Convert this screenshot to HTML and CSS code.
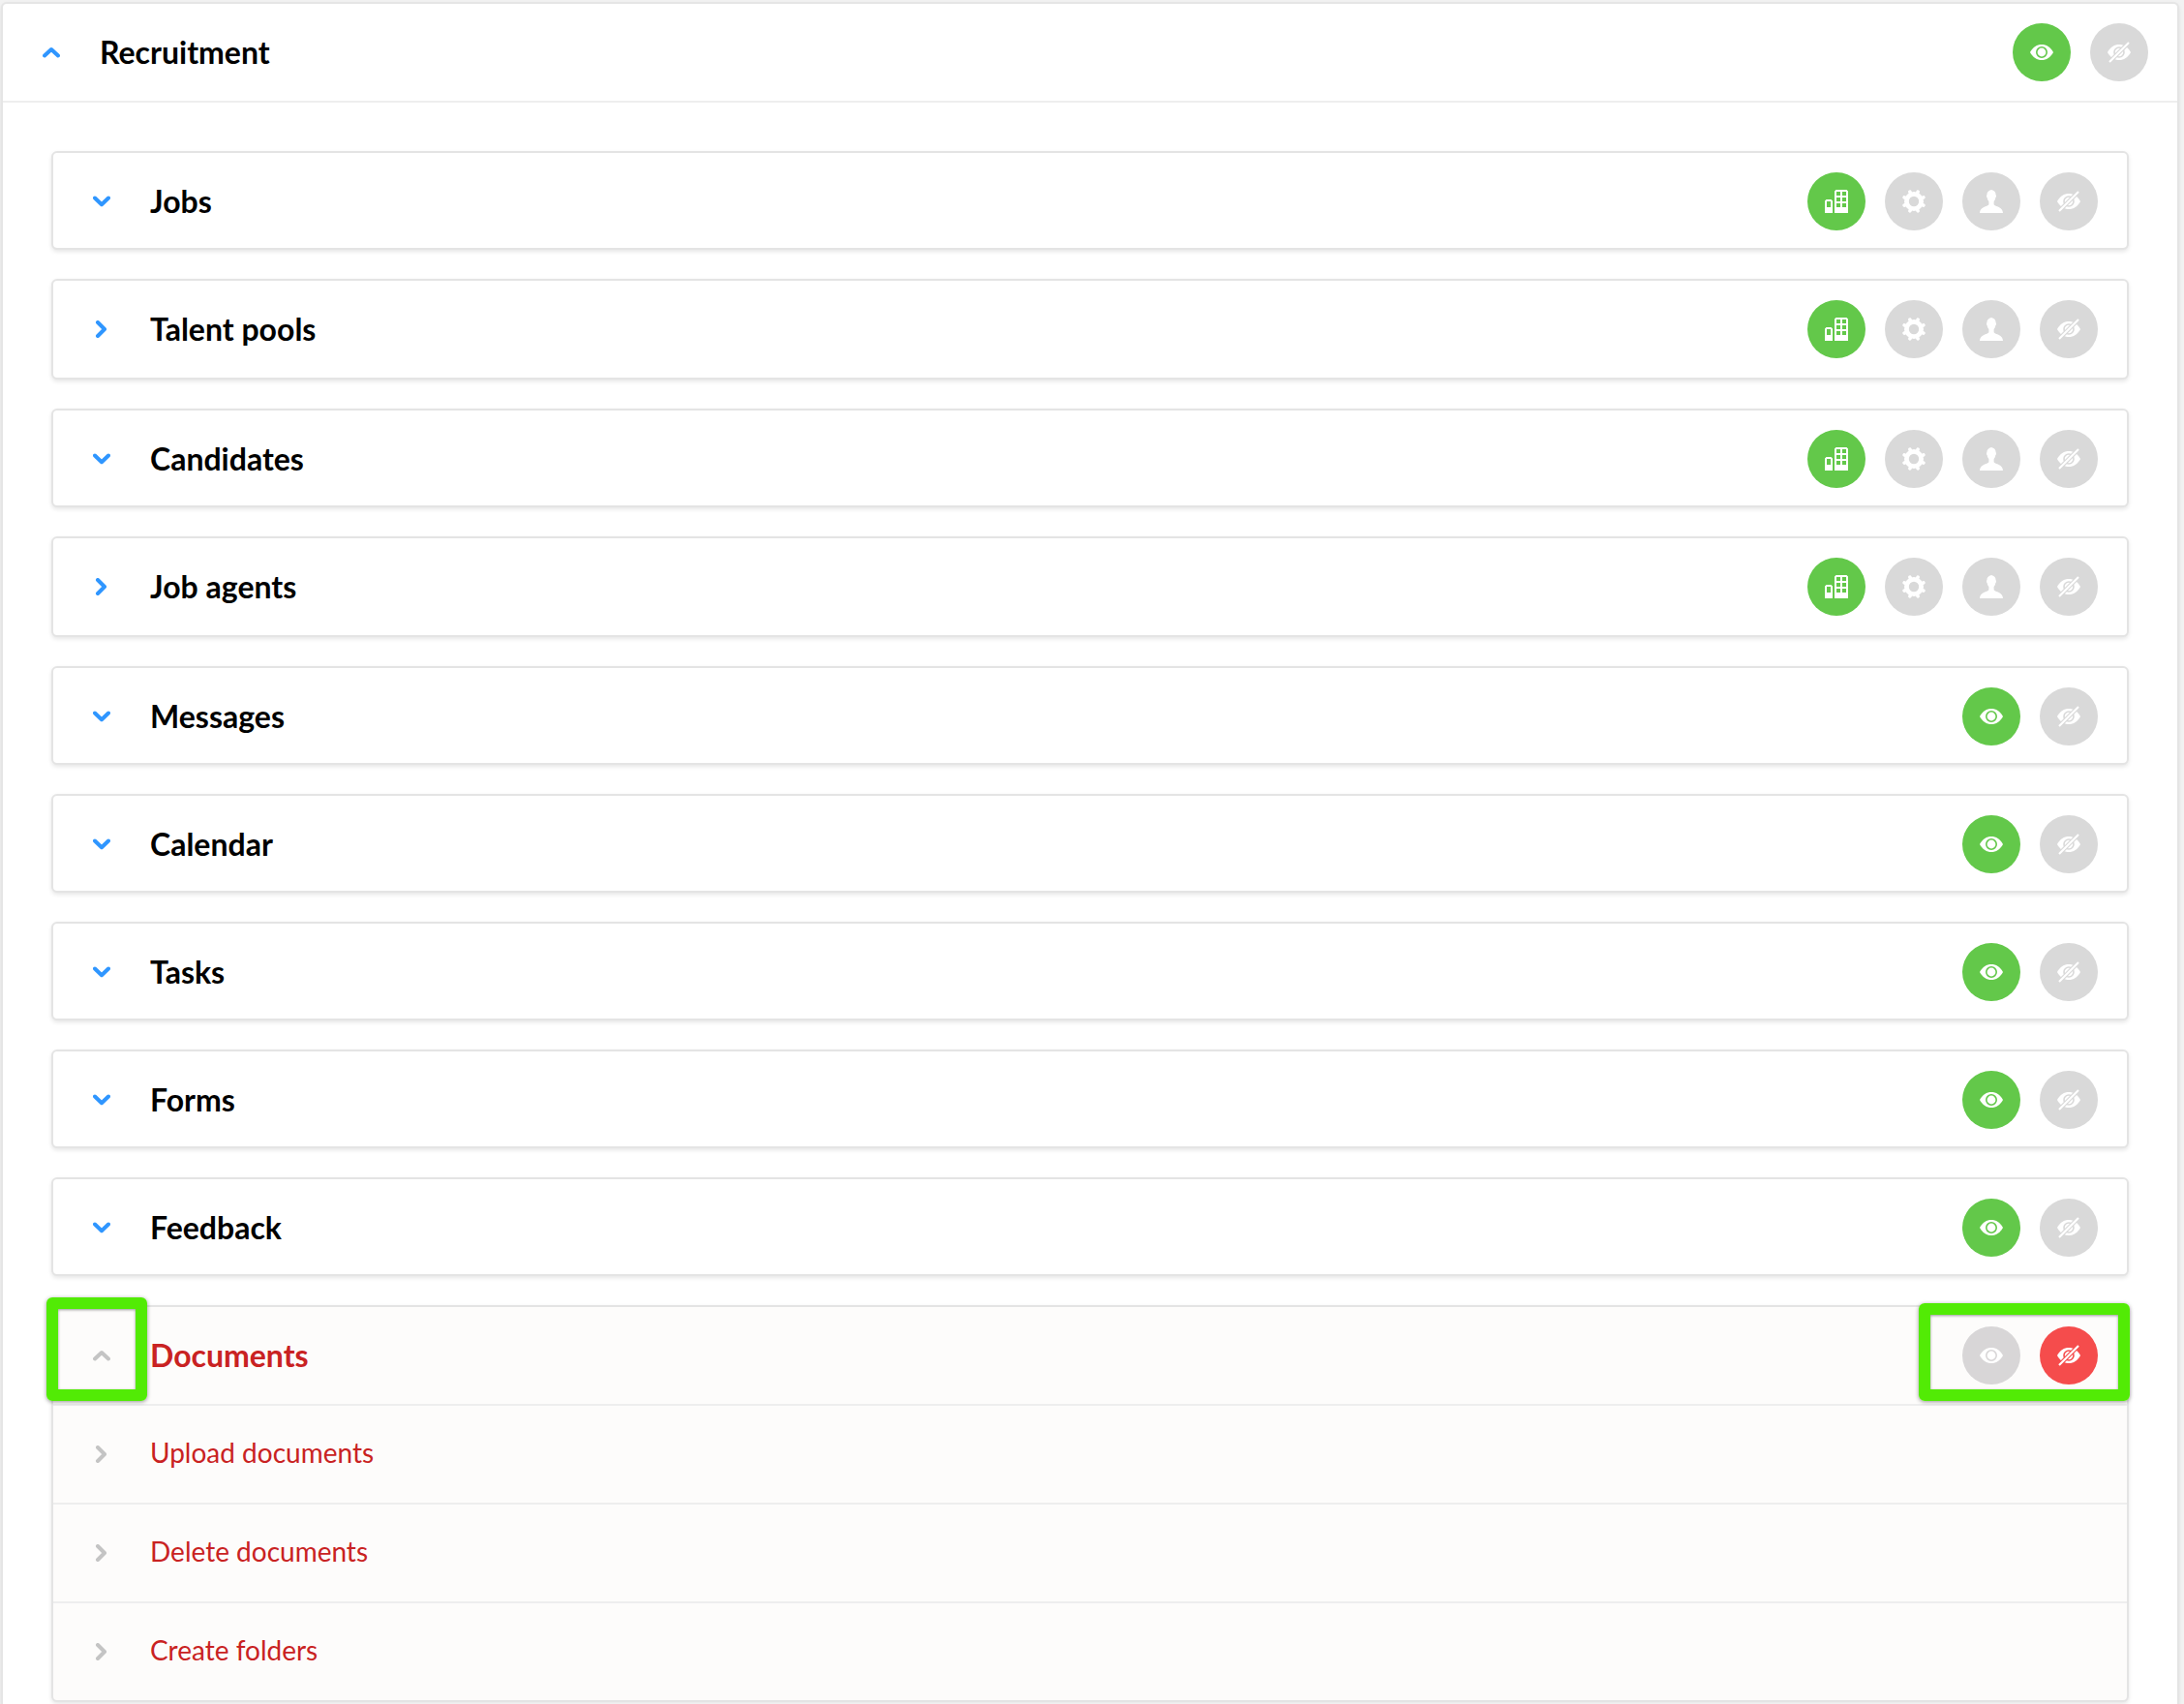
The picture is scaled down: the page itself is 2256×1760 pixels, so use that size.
FILE: index.html
```
<!DOCTYPE html>
<html lang="en">
<head>
<meta charset="utf-8">
<meta name="viewport" content="width=device-width, initial-scale=1">
<title>Recruitment permissions</title>
<link rel="stylesheet" href="styles.css">
</head>
<body>
<svg class="sprite" aria-hidden="true">
  <symbol id="down" viewBox="0 0 18 18"><path d="M2 5.500L9 12.200L16 5.500" fill="none" stroke="currentColor" stroke-width="4" stroke-linecap="round" stroke-linejoin="round"/></symbol>
  <symbol id="up" viewBox="0 0 18 18"><path d="M2 12.500L9 6L16 12.500" fill="none" stroke="currentColor" stroke-width="4" stroke-linecap="round" stroke-linejoin="round"/></symbol>
  <symbol id="right" viewBox="0 0 18 18"><path d="M5 2L12 9L5 16" fill="none" stroke="currentColor" stroke-width="4" stroke-linecap="round" stroke-linejoin="round"/></symbol>
  <symbol id="eye" viewBox="0 0 24 24">
    <path d="M0 12C3 6.600 7.200 4 12 4S21 6.600 24 12C21 17.400 16.800 20 12 20S3 17.400 0 12Z" fill="#fff"/>
    <circle cx="12" cy="12" r="5.200" fill="none" stroke="currentColor" stroke-width="1.600"/>
  </symbol>
  <symbol id="hidden" viewBox="0 0 24 24">
    <path d="M0 12C3 6.600 7.200 4 12 4S21 6.600 24 12C21 17.400 16.800 20 12 20S3 17.400 0 12Z" fill="#fff"/>
    <circle cx="12" cy="12" r="5" fill="none" stroke="currentColor" stroke-width="1.600"/>
    <path d="M2 22L22 2" stroke="currentColor" stroke-width="4.400"/>
    <path d="M2 22L22 2" stroke="#fff" stroke-width="2.200"/>
  </symbol>
  <symbol id="company" viewBox="0 0 24 24">
    <path fill="#fff" fill-rule="evenodd" d="M11.500 0H22.500L24 1.500V24H10V1.500ZM12 2V6H16V2ZM18 2V6H22V2ZM12 8V12H16V8ZM18 8V12H22V8ZM12 14V18H16V14ZM18 14V18H22V14ZM1.500 10H6.500L8 11.500V24H0V11.500ZM2 12V18H6V12Z"/>
  </symbol>
  <symbol id="gear" viewBox="-12 -12 24 24">
    <circle r="7.600" fill="none" stroke="#fff" stroke-width="4.800"/>
    <path d="M8.300 3.400L9.900 4.100M3.400 8.300L4.100 9.900M-3.400 8.300L-4.100 9.900M-8.300 3.400L-9.900 4.100M-8.300 -3.400L-9.900 -4.100M-3.400 -8.300L-4.100 -9.900M3.400 -8.300L4.100 -9.900M8.300 -3.400L9.900 -4.100" fill="none" stroke="#fff" stroke-width="3.600" stroke-linecap="round"/>
  </symbol>
  <symbol id="person" viewBox="0 0 24 24">
    <path fill="#fff" d="M12 0C15 .6 16.600 2.200 16.600 5.200C17.200 5.800 17.200 7.400 16.300 8.300C16 10 15.400 11.200 14.600 12V15.200C16 17.400 24 17.600 24 24H0C0 17.600 8 17.400 9.400 15.200V12C8.600 11.200 8 10 7.700 8.300C6.800 7.400 6.800 5.800 7.400 5.200C7.400 2.400 9 1 12 0Z"/>
  </symbol>
</svg>

<main class="panel">
  <header class="row panel-head">
    <button class="toggle" aria-label="Collapse Recruitment"><svg><use href="#up"/></svg></button>
    <h1 class="title">Recruitment</h1>
    <div class="modes">
      <button class="mode on" aria-label="Visible"><svg><use href="#eye"/></svg></button>
      <button class="mode" aria-label="Hidden"><svg><use href="#hidden"/></svg></button>
    </div>
  </header>

  <div class="cards">
    <section class="card"><div class="row">
      <button class="toggle" aria-label="Expand Jobs"><svg><use href="#down"/></svg></button>
      <h2 class="title">Jobs</h2>
      <div class="modes">
        <button class="mode on" aria-label="Company"><svg><use href="#company"/></svg></button>
        <button class="mode" aria-label="Custom"><svg><use href="#gear"/></svg></button>
        <button class="mode" aria-label="Own"><svg><use href="#person"/></svg></button>
        <button class="mode" aria-label="Hidden"><svg><use href="#hidden"/></svg></button>
      </div>
    </div></section>

    <section class="card"><div class="row leaf">
      <button class="toggle" aria-label="Open Talent pools"><svg><use href="#right"/></svg></button>
      <h2 class="title">Talent pools</h2>
      <div class="modes">
        <button class="mode on" aria-label="Company"><svg><use href="#company"/></svg></button>
        <button class="mode" aria-label="Custom"><svg><use href="#gear"/></svg></button>
        <button class="mode" aria-label="Own"><svg><use href="#person"/></svg></button>
        <button class="mode" aria-label="Hidden"><svg><use href="#hidden"/></svg></button>
      </div>
    </div></section>

    <section class="card"><div class="row">
      <button class="toggle" aria-label="Expand Candidates"><svg><use href="#down"/></svg></button>
      <h2 class="title">Candidates</h2>
      <div class="modes">
        <button class="mode on" aria-label="Company"><svg><use href="#company"/></svg></button>
        <button class="mode" aria-label="Custom"><svg><use href="#gear"/></svg></button>
        <button class="mode" aria-label="Own"><svg><use href="#person"/></svg></button>
        <button class="mode" aria-label="Hidden"><svg><use href="#hidden"/></svg></button>
      </div>
    </div></section>

    <section class="card"><div class="row leaf">
      <button class="toggle" aria-label="Open Job agents"><svg><use href="#right"/></svg></button>
      <h2 class="title">Job agents</h2>
      <div class="modes">
        <button class="mode on" aria-label="Company"><svg><use href="#company"/></svg></button>
        <button class="mode" aria-label="Custom"><svg><use href="#gear"/></svg></button>
        <button class="mode" aria-label="Own"><svg><use href="#person"/></svg></button>
        <button class="mode" aria-label="Hidden"><svg><use href="#hidden"/></svg></button>
      </div>
    </div></section>

    <section class="card"><div class="row">
      <button class="toggle" aria-label="Expand Messages"><svg><use href="#down"/></svg></button>
      <h2 class="title">Messages</h2>
      <div class="modes">
        <button class="mode on" aria-label="Visible"><svg><use href="#eye"/></svg></button>
        <button class="mode" aria-label="Hidden"><svg><use href="#hidden"/></svg></button>
      </div>
    </div></section>

    <section class="card"><div class="row">
      <button class="toggle" aria-label="Expand Calendar"><svg><use href="#down"/></svg></button>
      <h2 class="title">Calendar</h2>
      <div class="modes">
        <button class="mode on" aria-label="Visible"><svg><use href="#eye"/></svg></button>
        <button class="mode" aria-label="Hidden"><svg><use href="#hidden"/></svg></button>
      </div>
    </div></section>

    <section class="card"><div class="row">
      <button class="toggle" aria-label="Expand Tasks"><svg><use href="#down"/></svg></button>
      <h2 class="title">Tasks</h2>
      <div class="modes">
        <button class="mode on" aria-label="Visible"><svg><use href="#eye"/></svg></button>
        <button class="mode" aria-label="Hidden"><svg><use href="#hidden"/></svg></button>
      </div>
    </div></section>

    <section class="card"><div class="row">
      <button class="toggle" aria-label="Expand Forms"><svg><use href="#down"/></svg></button>
      <h2 class="title">Forms</h2>
      <div class="modes">
        <button class="mode on" aria-label="Visible"><svg><use href="#eye"/></svg></button>
        <button class="mode" aria-label="Hidden"><svg><use href="#hidden"/></svg></button>
      </div>
    </div></section>

    <section class="card"><div class="row">
      <button class="toggle" aria-label="Expand Feedback"><svg><use href="#down"/></svg></button>
      <h2 class="title">Feedback</h2>
      <div class="modes">
        <button class="mode on" aria-label="Visible"><svg><use href="#eye"/></svg></button>
        <button class="mode" aria-label="Hidden"><svg><use href="#hidden"/></svg></button>
      </div>
    </div></section>

    <section class="card denied">
      <div class="row leaf">
        <button class="toggle" aria-label="Collapse Documents"><svg><use href="#up"/></svg></button>
        <h2 class="title">Documents</h2>
        <div class="modes">
          <button class="mode" aria-label="Visible"><svg><use href="#eye"/></svg></button>
          <button class="mode off" aria-label="Hidden"><svg><use href="#hidden"/></svg></button>
        </div>
      </div>
      <div class="row leaf">
        <button class="toggle" aria-label="Open Upload documents"><svg><use href="#right"/></svg></button>
        <h3 class="subtitle">Upload documents</h3>
      </div>
      <div class="row leaf">
        <button class="toggle" aria-label="Open Delete documents"><svg><use href="#right"/></svg></button>
        <h3 class="subtitle">Delete documents</h3>
      </div>
      <div class="row leaf">
        <button class="toggle" aria-label="Open Create folders"><svg><use href="#right"/></svg></button>
        <h3 class="subtitle">Create folders</h3>
      </div>
      <div class="marker marker-toggle"></div>
      <div class="marker marker-modes"></div>
    </section>
  </div>
</main>
</body>
</html>
```
FILE: styles.css
```
* { box-sizing: border-box; }

body {
  margin: 0;
  padding: 2px 5px 0 1px;
  background: #f2f2f2;
  color: #000;
  font-family: Lato, "Liberation Sans", sans-serif;
}

.sprite { position: absolute; width: 0; height: 0; }

.panel {
  min-height: calc(100vh - 2px);
  background: #fff;
  border: 2px solid #e5e5e5;
  border-bottom: 0;
  border-radius: 6px 6px 0 0;
  box-shadow: 0 2px 4px rgba(0, 0, 0, .08);
}

.row {
  display: flex;
  align-items: center;
  min-height: 98px;
  padding: 20px 30px 18px 41px;
}

.leaf { padding-bottom: 20px; min-height: 100px; }

.panel-head {
  min-height: 102px;
  padding-bottom: 20px;
  border-bottom: 2px solid #eee;
}

.cards {
  display: flex;
  flex-direction: column;
  gap: 30px;
  padding: 50px 50px 0;
}

.card {
  position: relative;
  background: #fff;
  border: 2px solid #e4e4e4;
  border-radius: 6px;
  box-shadow: 0 2px 4px rgba(0, 0, 0, .1);
}

.toggle {
  width: 18px;
  height: 18px;
  margin: 0 41px 0 0;
  padding: 0;
  border: 0;
  background: none;
  color: #2f96ff;
  cursor: pointer;
}

.toggle svg { display: block; width: 18px; height: 18px; }

.title {
  margin: 0;
  font-size: 32px;
  font-weight: 700;
  line-height: 40px;
}

.subtitle {
  margin: 0;
  padding-bottom: 4px;
  font-size: 28px;
  font-weight: 400;
  line-height: 36px;
}

.modes { display: flex; gap: 20px; margin-left: auto; }

.mode {
  display: grid;
  place-items: center;
  width: 60px;
  height: 60px;
  padding: 0;
  border: 0;
  border-radius: 50%;
  background: currentColor;
  color: #d9d9d9;
  cursor: pointer;
}

.mode svg { width: 24px; height: 24px; }
.mode.on { color: #63c84a; }
.mode.off { color: #f54c4c; }

.denied { background: #fdfcfb; color: #c92222; }
.denied .row + .row { border-top: 2px solid #eee; min-height: 102px; }
.denied .toggle { color: #c4c4c4; }
.denied .mode:not(.off) { color: #d8d6d7; }

.marker {
  position: absolute;
  border: 12px solid #52eb05;
  border-radius: 6px;
  box-shadow: 0 1px 4px rgba(0, 0, 0, .4), inset 0 1px 3px rgba(0, 0, 0, .4);
  pointer-events: none;
}

.marker-toggle { top: -10px; left: -7px; width: 104px; height: 107px; }
.marker-modes { top: -4px; right: -3px; width: 218px; height: 101px; }
```
